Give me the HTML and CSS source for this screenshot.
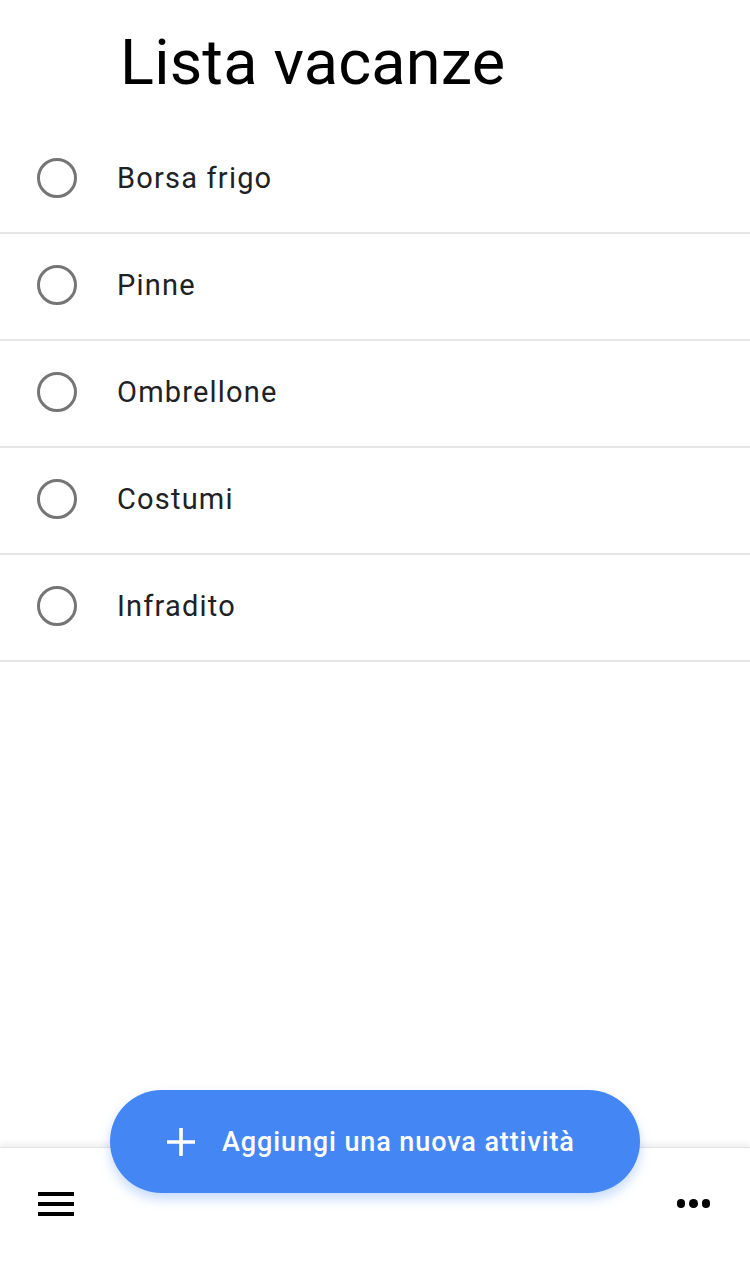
FILE: index.html
```html
<!DOCTYPE html>
<html lang="it">
<head>
<meta charset="utf-8">
<title>Lista vacanze</title>
<link rel="stylesheet" href="styles.css">
</head>
<body>
<div class="app">
  <header class="header">
    <h1 class="title">Lista vacanze</h1>
  </header>
  <ul class="tasks">
    <li class="task"><span class="check"></span><span class="label">Borsa frigo</span></li>
    <li class="task"><span class="check"></span><span class="label">Pinne</span></li>
    <li class="task"><span class="check"></span><span class="label">Ombrellone</span></li>
    <li class="task"><span class="check"></span><span class="label">Costumi</span></li>
    <li class="task"><span class="check"></span><span class="label">Infradito</span></li>
  </ul>
  <div class="spacer"></div>
  <footer class="bottombar">
    <button class="icon-btn menu" aria-label="Menu">
      <span class="bar"></span><span class="bar"></span><span class="bar"></span>
    </button>
    <button class="icon-btn more" aria-label="Altro">
      <span class="dot"></span><span class="dot"></span><span class="dot"></span>
    </button>
  </footer>
  <button class="fab">
    <svg class="plus" viewBox="0 0 30 30" width="30" height="30"><path d="M15 1v28M1 15h28" stroke="#fff" stroke-width="3.6" fill="none"/></svg>
    <span class="fab-label">Aggiungi una nuova attività</span>
  </button>
</div>
</body>
</html>
```
FILE: styles.css
```css
* { box-sizing: border-box; }
html, body { margin: 0; padding: 0; background: #fff; }
body { font-family: Roboto, "Open Sans", "Liberation Sans", sans-serif; color: #202124; }

.app {
  position: relative;
  width: 750px;
  height: 1264px;
  display: flex;
  flex-direction: column;
  overflow: hidden;
}

.header {
  height: 127px;
  padding-left: 120px;
  display: flex;
  align-items: flex-start;
}
.title {
  margin: 25px 0 0;
  font-size: 63px;
  font-weight: 400;
  line-height: 76px;
  color: #000;
  letter-spacing: 0.2px;
}

.tasks { list-style: none; margin: 0; padding: 0; }
.task {
  height: 107px;
  border-bottom: 2px solid #e6e6e6;
  display: flex;
  align-items: center;
  padding-left: 37px;
  padding-bottom: 3px;
}
.check {
  width: 40px;
  height: 40px;
  border: 3.5px solid #757575;
  border-radius: 50%;
  flex: none;
}
.label {
  margin-left: 40px;
  font-size: 29px;
  color: #202124;
  letter-spacing: 1.2px;
}

.spacer { flex: 1; }

.bottombar {
  height: 117px;
  flex: none;
  background: #fff;
  border-top: 1px solid #e2e2e2;
  box-shadow: 0 -4px 5px rgba(0,0,0,0.06);
  display: flex;
  justify-content: space-between;
  align-items: flex-start;
  padding: 44px 40px 0 38px;
}
.icon-btn {
  border: 0;
  background: none;
  padding: 0;
  margin: 0;
  display: flex;
}
.menu { flex-direction: column; gap: 6px; width: 36px; }
.bar { display: block; width: 36px; height: 4px; background: #000; }
.more { gap: 4px; margin-top: 7px; }
.dot { display: block; width: 8.5px; height: 8.5px; border-radius: 50%; background: #000; }

.fab {
  position: absolute;
  left: 110px;
  top: 1090px;
  width: 530px;
  height: 103px;
  border: 0;
  border-radius: 52px;
  background: #4486f4;
  box-shadow: 0 6px 12px rgba(66,133,244,0.3);
  display: flex;
  align-items: center;
  padding: 0 0 0 56px;
  color: #fff;
  font-family: Roboto, "Open Sans", "Liberation Sans", sans-serif;
}
.plus { flex: none; }
.fab-label {
  margin-left: 26px;
  font-size: 27px;
  font-weight: 500;
  letter-spacing: 0.9px;
}
```
